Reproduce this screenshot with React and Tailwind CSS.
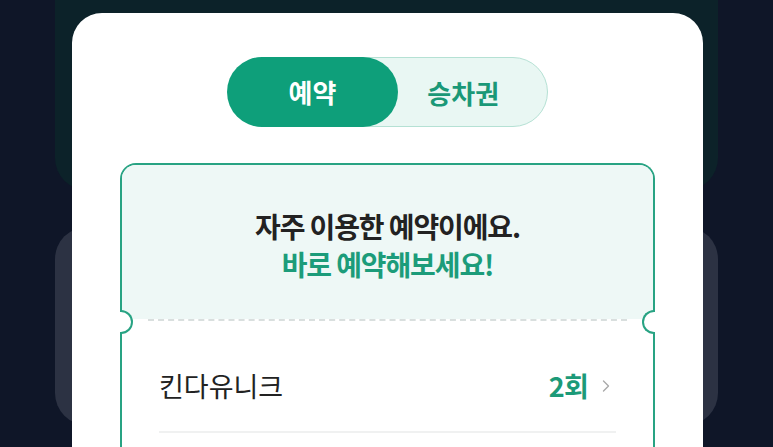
import React from 'react';
import { ChevronRight } from 'lucide-react';

const font = { fontFamily: '"Noto Sans CJK KR", "Noto Sans", sans-serif' };

const Notch = ({ side }) => (
  <div
    className={`absolute top-[145px] h-[24px] w-[13px] bg-white border-[2px] border-[#28a383] ${
      side === 'left'
        ? '-left-[2px] border-l-0 rounded-r-full'
        : '-right-[2px] border-r-0 rounded-l-full'
    }`}
  />
);

const Backdrop = () => (
  <div className="flex flex-col gap-[37px] px-[55px] -mt-[40px]">
    <div className="h-[230px] rounded-[32px] bg-[#0c2229]" />
    <div className="h-[198px] rounded-[32px] bg-[#2c3243]" />
  </div>
);

const ModeToggle = () => (
  <div className="mx-auto flex h-[70px] w-[320px] rounded-full border-[1.5px] border-[#b5e1d4] bg-[#e9f7f3]">
    <button className="-my-[1.5px] -ml-[1.5px] flex h-[70px] w-[171px] items-center justify-center rounded-full bg-[#0e9f7a] text-[26px] font-bold text-white">
      예약
    </button>
    <button className="flex flex-1 items-center justify-center pr-[18px] text-[26px] font-bold text-[#1a9877]">
      승차권
    </button>
  </div>
);

const FrequentTicket = () => (
  <div className="relative mx-[48px] mt-[36px] rounded-t-[16px] border-[2px] border-b-0 border-[#28a383] bg-white">
    <div className="rounded-t-[14px] bg-[#eef8f6] pt-[42px] pb-[36px] text-center text-[28px] font-bold leading-[38px] tracking-[-0.04em]">
      <p className="text-[#222222]">자주 이용한 예약이에요.</p>
      <p className="text-[#1c9c7a]">바로 예약해보세요!</p>
    </div>
    <div className="relative">
      <div className="absolute left-0 right-0 -top-[37px] h-[37px] bg-[#eef8f6]" />
      <div className="mx-[26px] border-t-[2px] border-dashed border-[#d9dfde]" />
    </div>
    <Notch side="left" />
    <Notch side="right" />
    <div className="px-[37px] pt-[49px]">
      <div className="flex items-center justify-between pb-[29px]">
        <span className="text-[27px] leading-[32px] text-[#222222]">킨다유니크</span>
        <span className="flex items-center gap-[8px]">
          <span className="text-[27px] font-bold leading-[32px] tracking-[-0.03em] text-[#1c9a78]">2회</span>
          <ChevronRight className="h-[20px] w-[20px] text-[#a9a9a9]" strokeWidth={1.6} />
        </span>
      </div>
      <div className="border-t-[2px] border-[#f0f1f1]" />
      <div className="h-[40px]" />
    </div>
  </div>
);

export default function App() {
  return (
    <div className="relative h-[447px] w-full overflow-hidden bg-[#0f1628]" style={font}>
      <Backdrop />
      <div className="absolute left-[72px] top-[13px] w-[631px] rounded-[30px] bg-white pt-[44px] pb-[40px]">
        <ModeToggle />
        <FrequentTicket />
      </div>
    </div>
  );
}
